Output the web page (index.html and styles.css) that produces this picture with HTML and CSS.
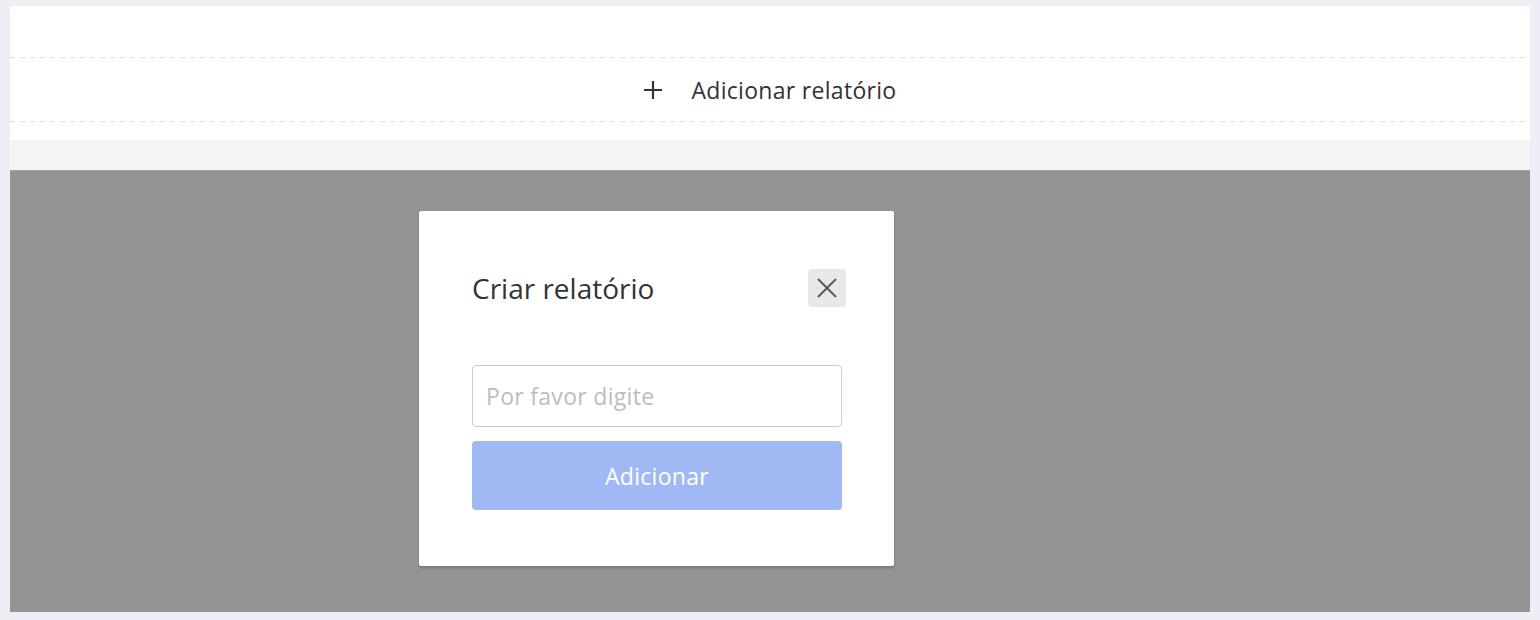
FILE: index.html
```html
<!DOCTYPE html>
<html lang="pt">
<head>
  <meta charset="UTF-8" />
  <meta name="viewport" content="width=device-width, initial-scale=1.0"/>
  <title>Relatórios</title>
  <link rel="stylesheet" href="styles.css">
</head>
<body>
  <div class="frame">
    <!-- Report list -->
    <div class="reports">
      <div class="add-row">
        <span class="plus">
          <svg width="20" height="20" viewBox="0 0 20 20">
            <path d="M10 1v18M1 10h18" stroke="#333" stroke-width="2.2" fill="none"/>
          </svg>
        </span>
        <span class="add-label">Adicionar relatório</span>
      </div>
    </div>
    <div class="band"></div>

    <!-- Create dialog -->
    <div class="overlay">
      <div class="modal">
        <div class="modal-head">
          <h2 class="modal-title">Criar relatório</h2>
          <button class="close-btn" aria-label="Fechar">
            <svg width="22" height="22" viewBox="0 0 22 22">
              <path d="M2 2l18 18M20 2L2 20" stroke="#555" stroke-width="1.8" fill="none"/>
            </svg>
          </button>
        </div>
        <input class="name-input" type="text" placeholder="Por favor digite">
        <button class="add-btn">Adicionar</button>
      </div>
    </div>
  </div>
</body>
</html>
```

FILE: styles.css
```css
* {
  margin: 0;
  padding: 0;
  box-sizing: border-box;
}

body, html {
  height: 100%;
  font-family: 'Open Sans', Lato, sans-serif;
  background: #f0edf7;
  overflow: hidden;
}

body {
  padding: 6px 10px 8px;
}

.frame {
  height: 100%;
  display: flex;
  flex-direction: column;
  background: #fff;
}

.reports {
  height: 134px;
  padding-top: 51px;
}

/* dashed rules above and below the add row */
.add-row {
  height: 65px;
  background:
    repeating-linear-gradient(to right, #e0e0e0 0 5px, transparent 5px 10px) top / 100% 1px no-repeat,
    repeating-linear-gradient(to right, #e0e0e0 0 5px, transparent 5px 10px) bottom / 100% 1px no-repeat;
  display: flex;
  align-items: center;
  justify-content: center;
  gap: 28px;
}

.plus {
  display: flex;
}

.add-label {
  font-size: 23px;
  letter-spacing: 0.3px;
  color: #333;
}

.band {
  height: 30px;
  background: #f4f4f4;
}

.overlay {
  flex: 1;
  background: #949494;
  border-top: 1px solid #a2a2a2;
  padding: 40px 0 0 409px;
}

.modal {
  width: 475px;
  height: 355px;
  background: #fff;
  border-radius: 2px;
  box-shadow: 0 2px 3px rgba(0, 0, 0, 0.2);
  padding: 58px 48px 0 53px;
}

.modal-head {
  display: flex;
  align-items: center;
  justify-content: space-between;
  height: 38px;
  margin-bottom: 58px;
}

.modal-title {
  font-size: 28px;
  font-weight: normal;
  color: #333;
}

.close-btn {
  width: 38px;
  height: 38px;
  border: none;
  border-radius: 4px;
  background: #e8e8e8;
  display: flex;
  align-items: center;
  justify-content: center;
  cursor: pointer;
}

.name-input {
  display: block;
  width: 370px;
  height: 62px;
  border: 1px solid #cdcdcd;
  border-radius: 4px;
  padding: 0 13px;
  font-family: inherit;
  font-size: 23px;
  letter-spacing: 0.3px;
  color: #333;
  outline: none;
}

.name-input::placeholder {
  color: #bdbdbd;
}

.add-btn {
  display: block;
  width: 370px;
  height: 69px;
  margin-top: 14px;
  border: none;
  border-radius: 4px;
  background: #a0b9f4;
  color: #fff;
  font-family: inherit;
  font-size: 23px;
  letter-spacing: 0.3px;
  cursor: pointer;
}
```
